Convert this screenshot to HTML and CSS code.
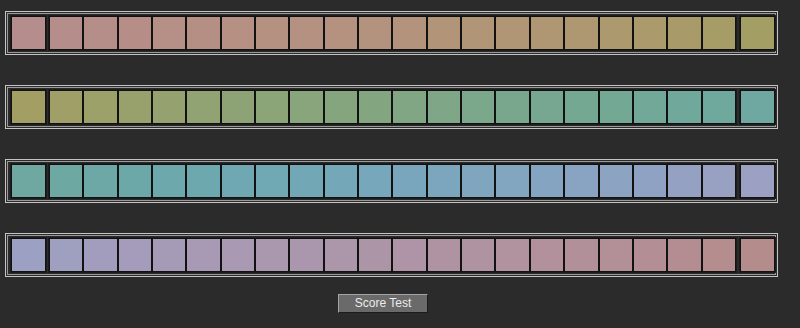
FILE: index.html
```html
<!DOCTYPE html>
<html lang="en">

<head>
    <meta charset="utf-8">
    <title>hue test</title>
    <link rel="stylesheet" href="styles.css">
</head>

<body>
<div class="board" id="board">
    <div class="tray"></div>
    <div class="tray"></div>
    <div class="tray"></div>
    <div class="tray"></div>
</div>

<div class="actions">
    <button class="score">Score Test</button>
</div>

<script>
    // end colours of each tray, the last of one tray is the first of the next
    const anchors = ['#b58d8c', '#a39e64', '#6ea8a0', '#9ca0c2', '#b58c8c'];
    // how much the chroma sags in the middle of each tray
    const sag = [0.22, 0.08, 0.05, 0.22];
    const perTray = 22;

    function toLinear(c) {
        return c <= 0.04045 ? c / 12.92 : Math.pow((c + 0.055) / 1.055, 2.4);
    }

    function fromLinear(c) {
        c = c <= 0.0031308 ? c * 12.92 : 1.055 * Math.pow(c, 1 / 2.4) - 0.055;
        return Math.max(0, Math.min(255, Math.round(c * 255)));
    }

    function hexToLch(hex) {
        let r = toLinear(parseInt(hex.substr(1, 2), 16) / 255);
        let g = toLinear(parseInt(hex.substr(3, 2), 16) / 255);
        let b = toLinear(parseInt(hex.substr(5, 2), 16) / 255);
        let x = (0.4124 * r + 0.3576 * g + 0.1805 * b) / 0.95047;
        let y = 0.2126 * r + 0.7152 * g + 0.0722 * b;
        let z = (0.0193 * r + 0.1192 * g + 0.9505 * b) / 1.08883;
        let f = t => t > 0.008856 ? Math.cbrt(t) : 7.787 * t + 16 / 116;
        let L = 116 * f(y) - 16;
        let A = 500 * (f(x) - f(y));
        let B = 200 * (f(y) - f(z));
        let h = Math.atan2(B, A) * 180 / Math.PI;
        if (h < 0) h += 360;
        return [L, Math.sqrt(A * A + B * B), h];
    }

    function lchToRgb(L, C, h) {
        let A = C * Math.cos(h * Math.PI / 180);
        let B = C * Math.sin(h * Math.PI / 180);
        let fy = (L + 16) / 116;
        let fx = fy + A / 500;
        let fz = fy - B / 200;
        let inv = t => t * t * t > 0.008856 ? t * t * t : (t - 16 / 116) / 7.787;
        let x = inv(fx) * 0.95047, y = inv(fy), z = inv(fz) * 1.08883;
        let r = 3.2406 * x - 1.5372 * y - 0.4986 * z;
        let g = -0.9689 * x + 1.8758 * y + 0.0415 * z;
        let b = 0.0557 * x - 0.2040 * y + 1.0570 * z;
        return 'rgb(' + fromLinear(r) + ',' + fromLinear(g) + ',' + fromLinear(b) + ')';
    }

    function makeCap(colour, extra) {
        let cap = document.createElement('div');
        cap.className = 'cap' + (extra ? ' ' + extra : '');
        cap.style.backgroundColor = colour;
        return cap;
    }

    let trays = document.querySelectorAll('.tray');
    trays.forEach(function (tray, i) {
        let a = hexToLch(anchors[i]);
        let b = hexToLch(anchors[i + 1]);
        let dh = b[2] - a[2];
        if (dh < 0) dh += 360;
        let colours = [];
        for (let k = 0; k < perTray; k++) {
            let t = k / (perTray - 1);
            let c = (a[1] + (b[1] - a[1]) * t) * (1 - sag[i] * Math.sin(Math.PI * t));
            colours.push(lchToRgb(a[0] + (b[0] - a[0]) * t, c, a[2] + dh * t));
        }
        tray.appendChild(makeCap(colours[0], 'fixed'));
        let caps = document.createElement('div');
        caps.className = 'caps';
        for (let k = 1; k < perTray - 1; k++) {
            caps.appendChild(makeCap(colours[k]));
        }
        tray.appendChild(caps);
        tray.appendChild(makeCap(colours[perTray - 1], 'fixed last'));
    });
</script>
</body>

</html>
```

FILE: styles.css
```css
* {
    margin: 0;
    padding: 0;
    box-sizing: border-box;
}

body {
    background-color: #2b2b2b;
    font-family: "Liberation Sans", Arial, sans-serif;
    padding-top: 11px;
    padding-left: 5px;
}

.board {
    width: 773px;
}

.tray {
    display: flex;
    height: 44px;
    margin-bottom: 30px;
    padding: 4px 2px 4px 5px;
    border: 1px solid #c4c4c4;
    box-shadow: inset 0 0 0 1px #2b2b2b, inset 0 0 0 2px #9a9a9a;
}

.tray:last-child {
    margin-bottom: 0;
}

.cap {
    height: 34px;
    border: 1px solid #121212;
    flex: 1;
}

.tray .fixed {
    flex: none;
    width: 35px;
    border: 1px solid #121212;
    box-shadow: 0 0 0 1px #1c1c1c;
}

.tray .last {
    margin-left: 4px;
}

.caps {
    display: flex;
    width: 687px;
    margin-left: 3px;
    box-shadow: 0 0 0 1px #1c1c1c;
}

.actions {
    padding-top: 16px;
    padding-left: 333px;
}

.score {
    width: 90px;
    height: 19px;
    background-color: #6a6a6a;
    color: #ececec;
    font-family: "Liberation Sans", Arial, sans-serif;
    font-size: 12px;
    border: 1px solid;
    border-color: #a4a4a4 #1c1c1c #1c1c1c #a4a4a4;
    line-height: 16px;
}
```
